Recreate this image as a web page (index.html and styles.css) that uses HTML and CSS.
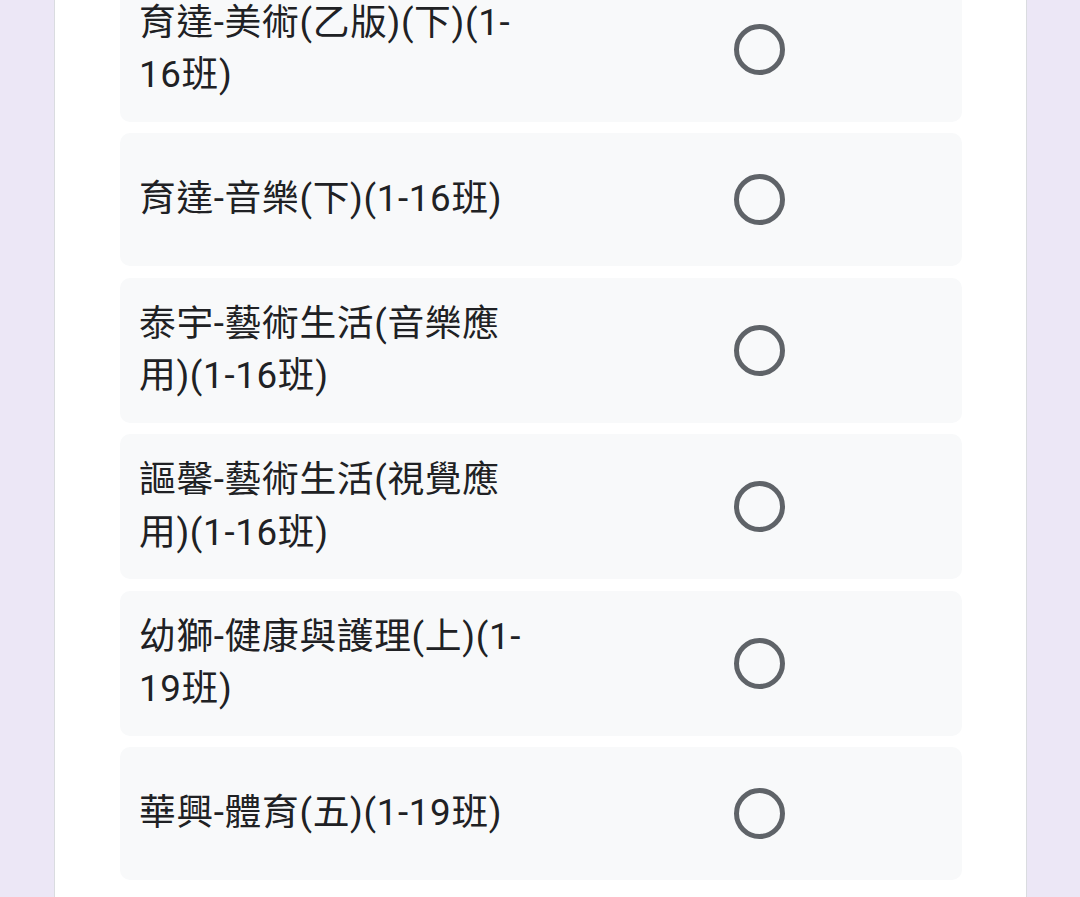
FILE: index.html
```html
<!DOCTYPE html>
<html lang="zh-Hant">
<head>
<meta charset="utf-8">
<title>Grid</title>
<link rel="stylesheet" href="styles.css">
</head>
<body>
<div class="card">
  <div class="list">
    <div class="row">
      <div class="label">育達-美術(乙版)(下)(1-<br>16班)</div>
      <div class="cell"><span class="radio"></span></div>
    </div>
    <div class="row">
      <div class="label">育達-音樂(下)(1-16班)</div>
      <div class="cell"><span class="radio"></span></div>
    </div>
    <div class="row">
      <div class="label">泰宇-藝術生活(音樂應<br>用)(1-16班)</div>
      <div class="cell"><span class="radio"></span></div>
    </div>
    <div class="row">
      <div class="label">謳馨-藝術生活(視覺應<br>用)(1-16班)</div>
      <div class="cell"><span class="radio"></span></div>
    </div>
    <div class="row">
      <div class="label">幼獅-健康與護理(上)(1-<br>19班)</div>
      <div class="cell"><span class="radio"></span></div>
    </div>
    <div class="row">
      <div class="label">華興-體育(五)(1-19班)</div>
      <div class="cell"><span class="radio"></span></div>
    </div>
  </div>
</div>
</body>
</html>
```
FILE: styles.css
```css
html, body {
  margin: 0;
  padding: 0;
}
body {
  background: #ece7f6;
  height: 897px;
  overflow: hidden;
  font-family: Roboto, "Noto Sans CJK TC", "Noto Sans", sans-serif;
  color: #202124;
}
.card {
  margin: -23.3px 53px 0 54px;
  background: #ffffff;
  border-left: 1px solid #dadce0;
  border-right: 1px solid #dadce0;
  padding: 0 64px 40px 65px;
  min-height: 960px;
}
.list {
  display: flex;
  flex-direction: column;
  gap: 11.4px;
}
.row {
  display: grid;
  grid-template-columns: 436px 1fr;
  align-items: center;
  box-sizing: border-box;
  min-height: 133.3px;
  padding: 20px 0;
  background: #f8f9fa;
  border-radius: 10px;
}
.label {
  padding: 0 20px 0 19px;
  font-size: 36.75px;
  line-height: 52.5px;
  letter-spacing: 0.65px;
  white-space: nowrap;
}
.cell {
  display: flex;
  justify-content: center;
  align-items: center;
}
.radio {
  display: block;
  box-sizing: border-box;
  width: 51px;
  height: 51px;
  border: 5px solid #5f6368;
  border-radius: 50%;
}
```
